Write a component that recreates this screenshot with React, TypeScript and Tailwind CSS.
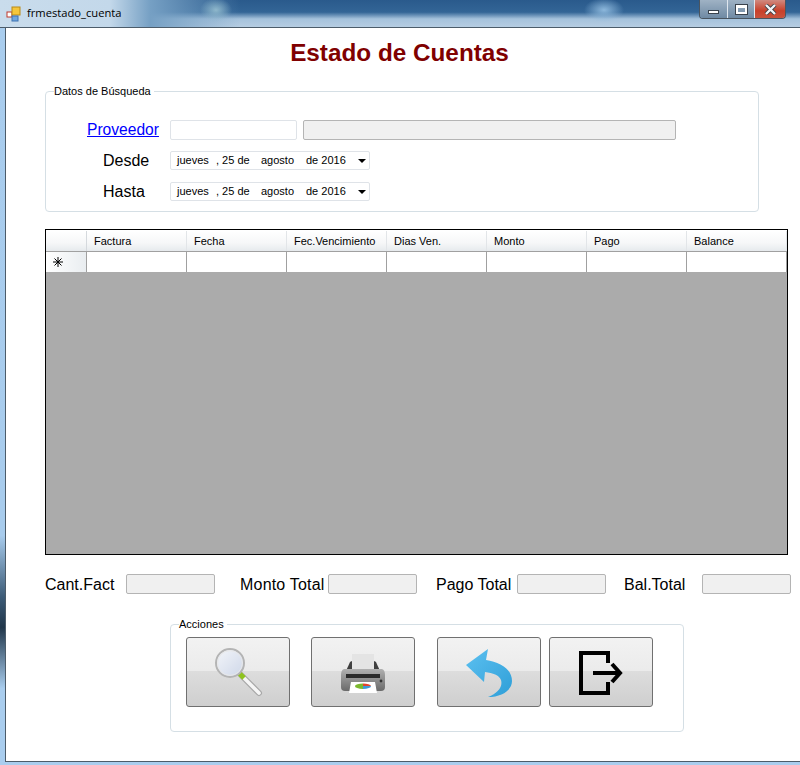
import React from "react";

const sans = "font-['Liberation_Sans',Arial,sans-serif]";

const columns = ["Factura", "Fecha", "Fec.Vencimiento", "Dias Ven.", "Monto", "Pago", "Balance"];

const SearchIcon = () => (
  <svg width="50" height="50" viewBox="0 0 50 50">
    <defs>
      <linearGradient id="lens" x1="0" y1="0" x2="1" y2="1">
        <stop offset="0" stopColor="#f4f6fa" />
        <stop offset="1" stopColor="#cdd6e8" />
      </linearGradient>
    </defs>
    <line x1="26" y1="27" x2="44" y2="45" stroke="#a8a8a8" strokeWidth="6" strokeLinecap="round" />
    <line x1="26" y1="27" x2="44" y2="45" stroke="#f6f6f6" strokeWidth="3.6" strokeLinecap="round" />
    <line x1="24" y1="25" x2="29" y2="30" stroke="#8fc31f" strokeWidth="5" />
    <circle cx="15" cy="15" r="14" fill="url(#lens)" stroke="#b4b4b4" strokeWidth="2" />
    <circle cx="15" cy="15" r="12.4" fill="none" stroke="#e8e8e8" strokeWidth="1" />
  </svg>
);

const PrinterIcon = () => (
  <svg width="46" height="40" viewBox="0 0 46 40">
    <defs>
      <linearGradient id="body" x1="0" y1="0" x2="0" y2="1">
        <stop offset="0" stopColor="#b0b0b0" />
        <stop offset="1" stopColor="#6a6a6a" />
      </linearGradient>
    </defs>
    <path d="M6 17 L10 8 Q11 7 13 7 H33 Q35 7 36 8 L40 17 Z" fill="#3f3f3f" />
    <rect x="12" y="0" width="22" height="15" fill="#e4e4e4" />
    <path d="M4 15 H42 Q45 16 45 21 V33 Q45 37 41 37 H5 Q1 37 1 33 V21 Q1 16 4 15 Z" fill="url(#body)" />
    <rect x="6" y="20" width="34" height="4" fill="#2a2a2a" />
    <path d="M11 28 H35 L37 39 H9 Z" fill="#ffffff" />
    <circle cx="41" cy="27" r="1.4" fill="#333333" />
    <path d="M23 32 V29.4 A8 2.8 0 0 1 31 32 Z" fill="#e2452c" />
    <path d="M23 32 H31 A8 2.8 0 0 1 23 35 Z" fill="#3f9ad6" />
    <path d="M23 32 V35 A8 2.8 0 0 1 15 32 A8 2.8 0 0 1 23 29.4 Z" fill="#7cb82f" />
  </svg>
);

const BackIcon = () => (
  <svg width="46" height="48" viewBox="0 0 46 48">
    <defs>
      <linearGradient id="back" x1="0" y1="0" x2="1" y2="1">
        <stop offset="0" stopColor="#5cc0f0" />
        <stop offset="1" stopColor="#2f9fd8" />
      </linearGradient>
    </defs>
    <path
      d="M22 0 L20 11 C34 13 46 20 46 32 C46 41 36 48 22 48 C32 44 37 38 35 31 C33 26 27 24 19 23 L18 33 L0 16 Z"
      fill="url(#back)"
    />
  </svg>
);

const ExitIcon = () => (
  <svg width="44" height="44" viewBox="0 0 44 44" fill="none" stroke="#000" strokeWidth="4">
    <path d="M29 12 V2 H2 V42 H29 V31" />
    <path d="M14 22 H41" />
    <path d="M33 13 L41 22 L33 31" />
  </svg>
);

const RowMarker = () => (
  <svg width="10" height="10" viewBox="0 0 10 10" stroke="#000" strokeWidth="1">
    <path d="M5 0 V10 M0 5 H10 M1.5 1.5 L8.5 8.5 M8.5 1.5 L1.5 8.5" />
  </svg>
);

const ActionButton = ({ className, children }: { className?: string; children: React.ReactNode }) => (
  <button
    className={`flex h-[70px] w-[104px] items-center justify-center rounded-[3px] border border-[#707070] bg-[linear-gradient(#f2f2f2_0%,#ebebeb_48%,#dddddd_48%,#cfcfcf_100%)] ${className ?? ""}`}
  >
    {children}
  </button>
);

const DatePicker = ({ className }: { className?: string }) => (
  <div
    className={`flex h-[19px] w-[200px] items-center rounded-[2px] border border-[#dfe3e8] bg-white pl-[6px] text-[11px] text-black ${className ?? ""}`}
  >
    <span className="w-[39px]">jueves</span>
    <span className="w-[45px]">, 25 de</span>
    <span className="w-[45px]">agosto</span>
    <span>de 2016</span>
    <span className="ml-[12px] h-0 w-0 border-x-[4px] border-t-[4px] border-x-transparent border-t-black" />
  </div>
);

const TotalBox = ({ className }: { className?: string }) => (
  <div className={`h-[20px] w-[89px] rounded-[2px] border border-[#b4b4b4] bg-[#f0f0f0] ${className ?? ""}`} />
);

export default function App() {
  return (
    <div
      className={`flex h-[765px] w-[800px] flex-col overflow-hidden bg-[linear-gradient(180deg,#a9cdee_0%,#a8cced_70%,#3d5c78_78%,#20364a_82%,#a9cdee_90%)] ${sans}`}
    >
      {/* title bar */}
      <div className="flex h-[28px] shrink-0 items-start justify-between border-b border-[#4c5c6a] bg-[radial-gradient(ellipse_16px_12px_at_216px_10px,#8fb8cc,transparent),radial-gradient(ellipse_20px_12px_at_604px_10px,#8db8dc,transparent),linear-gradient(90deg,#c9dcec_0,#c3d8ea_110px,#76a0c4_150px,transparent_240px),linear-gradient(180deg,#2a5a8c_0,#336596_45%,#a5c2dc_70%,#b6cde2_100%)]">
        <div className="flex h-[27px] items-center pl-[6px]">
          <svg width="16" height="16" viewBox="0 0 16 16">
            <rect x="1" y="6" width="5" height="5" fill="#fff" stroke="#c0392b" />
            <rect x="6" y="1" width="8" height="8" fill="#f5c63c" stroke="#b98a14" />
            <rect x="6" y="10" width="6" height="5" fill="#6ea6e0" stroke="#3f73b0" />
          </svg>
          <span className="ml-[5px] font-['Open_Sans',sans-serif] text-[11.2px] text-black">frmestado_cuenta</span>
        </div>
        <div className="mr-[14px] flex h-[19px] w-[87px] overflow-hidden rounded-b-[4px] border border-t-0 border-[#4a5560]">
          <div className="flex w-[28px] items-center justify-center border-r border-[#dfe6ee] bg-[linear-gradient(#9fb2c4,#6f8aa4)]">
            <span className="mt-[5px] h-[4px] w-[11px] border border-[#39424c] bg-white" />
          </div>
          <div className="flex w-[27px] items-center justify-center border-r border-[#dfe6ee] bg-[linear-gradient(#9fb2c4,#6f8aa4)]">
            <span className="flex h-[9px] w-[11px] border-2 border-t-[3px] border-white outline outline-[#39424c]" />
          </div>
          <div className="flex flex-1 items-center justify-center bg-[linear-gradient(#d08a80,#c8402a_60%,#c9523c)]">
            <svg width="13" height="11" viewBox="0 0 13 11">
              <path d="M2 1 L11 10 M11 1 L2 10" stroke="#3a3f46" strokeWidth="4" />
              <path d="M2 1 L11 10 M11 1 L2 10" stroke="#f2f5f8" strokeWidth="2.4" />
            </svg>
          </div>
        </div>
      </div>

      {/* client area */}
      <div className="ml-[5px] h-[734px] shrink-0 border-b border-l border-[#4c5c6a] bg-white pl-[39px]">
        <h1 className="mr-[46px] mt-[9px] text-center text-[24.3px] font-bold leading-[32px] text-[#800000]">
          Estado de Cuentas
        </h1>

        <fieldset className="mt-[16px] h-[127px] w-[714px] rounded-[4px] border border-[#d5dfe5] pl-[8px]">
          <legend className="px-0 pr-[3px] text-[11px] leading-[13px] text-black">Datos de Búsqueda</legend>
          <div className="mt-[22px] flex h-[20px] items-center">
            <a className="ml-[33px] w-[83px] text-[15.6px] text-[#0000ff] underline">Proveedor</a>
            <div className="h-[20px] w-[127px] rounded-[2px] border border-[#dfe3e8] bg-white" />
            <div className="ml-[6px] h-[20px] w-[373px] rounded-[2px] border border-[#b4b4b4] bg-[#f0f0f0]" />
          </div>
          <div className="mt-[11px] flex h-[19px] items-center">
            <span className="ml-[49px] w-[67px] text-[16px] text-black">Desde</span>
            <DatePicker />
          </div>
          <div className="mt-[12px] flex h-[19px] items-center">
            <span className="ml-[49px] w-[67px] text-[16px] text-black">Hasta</span>
            <DatePicker />
          </div>
        </fieldset>

        <div className="mt-[17px] flex h-[326px] w-[743px] flex-col border border-black bg-[#ababab]">
          <div className="flex h-[21px] border-t border-white bg-[linear-gradient(#ffffff,#f6f7f8_60%,#e6eaed)]">
            <div className="w-[41px] shrink-0 border-r border-[#d5d9dd]" />
            {columns.map((col) => (
              <div
                key={col}
                className="flex w-[100px] shrink-0 items-center border-r border-[#e2e5e8] pl-[7px] text-[11px] text-black"
              >
                {col}
              </div>
            ))}
          </div>
          <div className="flex h-[21px] border-t border-[#a0a0a0] bg-white">
            <div className="flex w-[41px] shrink-0 items-center border-r border-[#a0a0a0] bg-[linear-gradient(90deg,#ffffff,#e9edf0)] pl-[7px]">
              <RowMarker />
            </div>
            {columns.map((col) => (
              <div key={col} className="w-[100px] shrink-0 border-r border-[#a0a0a0]" />
            ))}
          </div>
        </div>

        <div className="mt-[19px] flex h-[20px] items-center text-[16px] leading-[22px] text-black">
          <span className="mt-[2px] w-[81px]">Cant.Fact</span>
          <TotalBox />
          <span className="ml-[25px] mt-[2px] w-[88px] tracking-[0.2px]">Monto Total</span>
          <TotalBox />
          <span className="ml-[19px] mt-[2px] w-[81px]">Pago Total</span>
          <TotalBox />
          <span className="ml-[18px] mt-[2px] w-[78px]">Bal.Total</span>
          <TotalBox />
        </div>

        <fieldset className="ml-[125px] mt-[24px] h-[114px] w-[514px] rounded-[4px] border border-[#d5dfe5] pl-[8px]">
          <legend className="pr-[3px] text-[11px] leading-[13px] text-black">Acciones</legend>
          <div className="ml-[7px] mt-[6px] flex">
            <ActionButton>
              <div className="ml-[3px] mt-[2px]">
                <SearchIcon />
              </div>
            </ActionButton>
            <ActionButton className="ml-[21px]">
              <div className="mt-[4px]">
                <PrinterIcon />
              </div>
            </ActionButton>
            <ActionButton className="ml-[22px]">
              <div className="mt-[2px]">
                <BackIcon />
              </div>
            </ActionButton>
            <ActionButton className="ml-[8px]">
              <div className="mt-[1px]">
                <ExitIcon />
              </div>
            </ActionButton>
          </div>
        </fieldset>
      </div>
    </div>
  );
}
